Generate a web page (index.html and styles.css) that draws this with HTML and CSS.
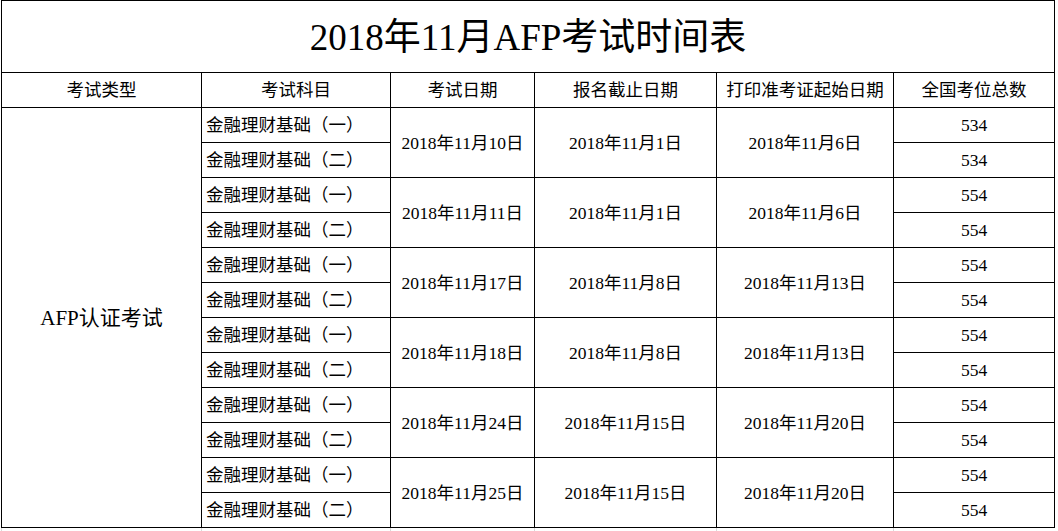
FILE: index.html
```html
<!DOCTYPE html>
<html lang="zh-CN">
<head>
<meta charset="utf-8">
<title>2018年11月AFP考试时间表</title>
<link rel="stylesheet" href="styles.css">
</head>
<body>
<table class="sheet">
  <colgroup>
    <col class="c1"><col class="c2"><col class="c3"><col class="c4"><col class="c5"><col class="c6">
  </colgroup>
  <tr class="title-row"><td colspan="6" class="title">2018年11月AFP考试时间表</td></tr>
  <tr class="head-row">
    <td>考试类型</td><td>考试科目</td><td>考试日期</td><td>报名截止日期</td><td>打印准考证起始日期</td><td>全国考位总数</td>
  </tr>
  <tr>
    <td rowspan="12" class="type">AFP认证考试</td>
    <td class="subj">金融理财基础（一）</td><td rowspan="2">2018年11月10日</td><td rowspan="2">2018年11月1日</td><td rowspan="2">2018年11月6日</td><td>534</td>
  </tr>
  <tr><td class="subj">金融理财基础（二）</td><td>534</td></tr>
  <tr>
    <td class="subj">金融理财基础（一）</td><td rowspan="2">2018年11月11日</td><td rowspan="2">2018年11月1日</td><td rowspan="2">2018年11月6日</td><td>554</td>
  </tr>
  <tr><td class="subj">金融理财基础（二）</td><td>554</td></tr>
  <tr>
    <td class="subj">金融理财基础（一）</td><td rowspan="2">2018年11月17日</td><td rowspan="2">2018年11月8日</td><td rowspan="2">2018年11月13日</td><td>554</td>
  </tr>
  <tr><td class="subj">金融理财基础（二）</td><td>554</td></tr>
  <tr>
    <td class="subj">金融理财基础（一）</td><td rowspan="2">2018年11月18日</td><td rowspan="2">2018年11月8日</td><td rowspan="2">2018年11月13日</td><td>554</td>
  </tr>
  <tr><td class="subj">金融理财基础（二）</td><td>554</td></tr>
  <tr>
    <td class="subj">金融理财基础（一）</td><td rowspan="2">2018年11月24日</td><td rowspan="2">2018年11月15日</td><td rowspan="2">2018年11月20日</td><td>554</td>
  </tr>
  <tr><td class="subj">金融理财基础（二）</td><td>554</td></tr>
  <tr>
    <td class="subj">金融理财基础（一）</td><td rowspan="2">2018年11月25日</td><td rowspan="2">2018年11月15日</td><td rowspan="2">2018年11月20日</td><td>554</td>
  </tr>
  <tr><td class="subj">金融理财基础（二）</td><td>554</td></tr>
  <tr class="grid-row"><td></td><td></td><td></td><td></td><td></td><td></td></tr>
</table>
</body>
</html>
```
FILE: styles.css
```css
html, body {
  margin: 0;
  padding: 0;
  background: #fff;
}
body {
  padding-left: 1px;
  font-family: "Liberation Serif", "Noto Sans CJK SC", serif;
  color: #000;
}
.sheet {
  border-collapse: collapse;
  table-layout: fixed;
  width: 1054px;
}
.c1 { width: 200px; }
.c2 { width: 189px; }
.c3 { width: 144px; }
.c4 { width: 182px; }
.c5 { width: 177px; }
.c6 { width: 161px; }
.sheet td {
  border: 1px solid #000;
  height: 34px;
  padding: 0;
  text-align: center;
  vertical-align: middle;
  font-size: 17.5px;
  line-height: 20px;
  white-space: nowrap;
}
.sheet .title-row td {
  height: 69px;
  font-size: 37px;
  line-height: 40px;
  padding-top: 2px;
}
.sheet td.subj {
  text-align: left;
  padding-left: 4px;
}
.sheet td.type {
  font-size: 21px;
}
.sheet .grid-row td {
  height: 4px;
  border: none;
  border-left: 1px solid #dadada;
  line-height: 0;
}
```
